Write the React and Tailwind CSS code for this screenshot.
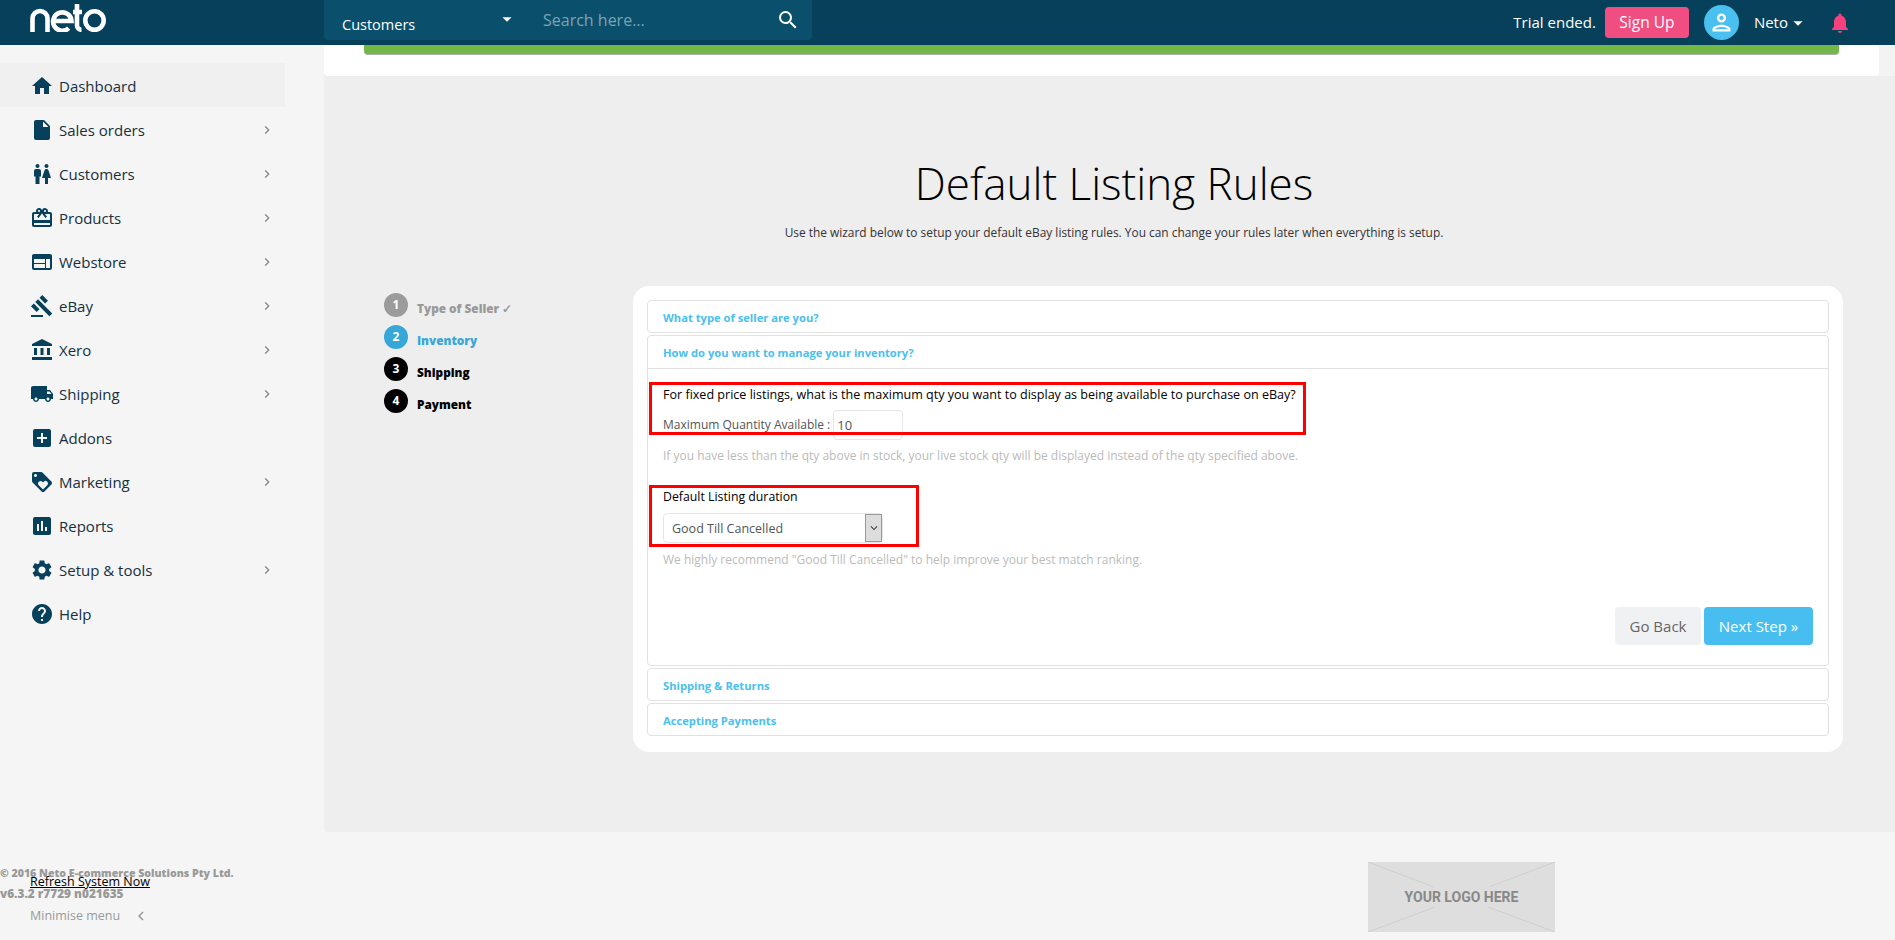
import {
  MdHome, MdInsertDriveFile, MdWc, MdCardGiftcard, MdWeb, MdGavel, MdAccountBalance,
  MdLocalShipping, MdAddBox, MdLoyalty, MdAssessment, MdSettings, MdHelp, MdChevronRight,
  MdChevronLeft, MdSearch, MdOutlinePerson, MdNotifications, MdArrowDropDown, MdKeyboardArrowDown,
} from 'react-icons/md';

const MENU = [
  { label: 'Dashboard', icon: MdHome, active: true },
  { label: 'Sales orders', icon: MdInsertDriveFile, arrow: true },
  { label: 'Customers', icon: MdWc, arrow: true },
  { label: 'Products', icon: MdCardGiftcard, arrow: true },
  { label: 'Webstore', icon: MdWeb, arrow: true },
  { label: 'eBay', icon: MdGavel, arrow: true },
  { label: 'Xero', icon: MdAccountBalance, arrow: true },
  { label: 'Shipping', icon: MdLocalShipping, arrow: true },
  { label: 'Addons', icon: MdAddBox },
  { label: 'Marketing', icon: MdLoyalty, arrow: true },
  { label: 'Reports', icon: MdAssessment },
  { label: 'Setup & tools', icon: MdSettings, arrow: true },
  { label: 'Help', icon: MdHelp },
];

const STEPS = [
  { n: 1, label: 'Type of Seller ✓', circle: 'bg-[#9b9b9b]', text: 'text-[#999999]' },
  { n: 2, label: 'Inventory', circle: 'bg-[#36a7d6]', text: 'text-[#36a7d6]' },
  { n: 3, label: 'Shipping', circle: 'bg-black', text: 'text-black' },
  { n: 4, label: 'Payment', circle: 'bg-black', text: 'text-black' },
];

function NetoLogo() {
  return (
    <svg width="76" height="28" viewBox="0 0 76 28" fill="none" stroke="white" strokeWidth="4.6">
      <path d="M2.5 28V14.5a7.5 7.5 0 0 1 15 0V28" />
      <path d="M24 17h17.5a9.2 9.2 0 1 0-2.8 7.2" />
      <path d="M47 0v21a4.5 4.5 0 0 0 4.5 4.8M43 8h9" />
      <circle cx="64.5" cy="16.5" r="9.2" />
    </svg>
  );
}

function Header() {
  return (
    <header className="h-[45px] bg-[#07405a] flex items-start text-white relative z-10">
      <div className="w-[324px] pl-[30px] pt-[4px] shrink-0">
        <NetoLogo />
      </div>
      <div className="w-[488px] h-[40px] bg-[#0a4f6b] rounded-b flex items-center relative">
        <span className="absolute left-[18px] top-[14px] text-[14.5px] leading-[22px]">Customers</span>
        <MdArrowDropDown className="absolute left-[172px] top-[8px] text-[22px]" />
        <span className="absolute left-[219px] top-[9px] text-[16px] leading-[22px] text-[#7fa3b5]">Search here...</span>
        <MdSearch className="absolute right-[12px] top-[8px] text-[24px]" />
      </div>
      <div className="ml-auto flex items-center h-[45px] pr-[43px]">
        <span className="text-[15px]">Trial ended.</span>
        <button className="ml-[9px] w-[84px] h-[31px] rounded bg-[#f04e80] text-[15.5px]">Sign Up</button>
        <div className="ml-[15px] w-[35px] h-[35px] rounded-full bg-[#4ac0f0] flex items-center justify-center">
          <MdOutlinePerson className="text-[27px]" />
        </div>
        <span className="ml-[15px] text-[15px]">Neto</span>
        <MdArrowDropDown className="text-[22px] -ml-[1px]" />
        <MdNotifications className="ml-[19px] text-[24px] text-[#f8407c]" />
      </div>
    </header>
  );
}

function Sidebar() {
  return (
    <nav className="w-[324px] shrink-0 pt-[18px]">
      {MENU.map(m => {
        const Icon = m.icon;
        return (
          <div key={m.label}
               className={`w-[285px] h-[44px] flex items-center pl-[30px] pr-[10px] pt-[2px] text-[15px] text-[#15303f] ${m.active ? 'bg-[#f0f0f0]' : ''}`}>
            <Icon className="w-[24px] h-[24px] text-[#07405a] shrink-0" />
            <span className="ml-[5px]">{m.label}</span>
            {m.arrow && <MdChevronRight className="ml-auto text-[16px] text-[#888888]" />}
          </div>
        );
      })}
    </nav>
  );
}

function Wizard() {
  return (
    <div className="w-[1210px] h-[466px] bg-white rounded-2xl p-[14px] flex flex-col gap-[2px]">
      <div className="border border-[#e2e2e2] rounded h-[33px] flex items-center pl-[15px] pt-[4px] text-[11.2px] font-bold text-[#4ac0f0]">
        What type of seller are you?
      </div>
      <div className="border border-[#e2e2e2] rounded h-[331px]">
        <div className="h-[33px] border-b border-[#e2e2e2] flex items-center pl-[15px] pt-[3px] text-[11.2px] font-bold text-[#4ac0f0]">
          How do you want to manage your inventory?
        </div>
        <div className="relative pl-[15px] pr-[15px] pt-[16px]">
          <p className="text-[12.55px] leading-[20px] text-black">
            For fixed price listings, what is the maximum qty you want to display as being available to purchase on eBay?
          </p>
          <div className="mt-[5px] flex items-center text-[12px] text-[#555555]">
            <span>Maximum Quantity Available :</span>
            <input readOnly value="10" className="ml-[3px] w-[70px] h-[30px] border border-[#e6e6e6] rounded px-[3px] text-[13px] text-[#555555]" />
          </div>
          <p className="mt-[6px] text-[12px] leading-[20px] text-[#bbbbbb]">
            If you have less than the qty above in stock, your live stock qty will be displayed instead of the qty specified above.
          </p>
          <p className="mt-[21px] text-[12.3px] leading-[20px] text-black">Default Listing duration</p>
          <div className="mt-[6px] w-[220px] h-[30px] border border-[#e6e6e6] rounded flex items-center justify-between pl-[8px] text-[12.5px] text-[#555555]">
            <span className="pt-[2px]">Good Till Cancelled</span>
            <span className="w-[17px] h-[28px] bg-[#dddddd] border border-[#999999] flex items-center justify-center">
              <MdKeyboardArrowDown className="text-[14px] text-[#444444]" />
            </span>
          </div>
          <p className="mt-[7px] text-[12px] leading-[20px] text-[#bbbbbb]">
            We highly recommend "Good Till Cancelled" to help improve your best match ranking.
          </p>
          <div className="mt-[37px] flex justify-end gap-[3px] text-[15px]">
            <button className="w-[86px] h-[38px] rounded bg-[#f0f1f3] text-[#666666]">Go Back</button>
            <button className="w-[109px] h-[38px] rounded bg-[#48bef0] text-white">Next Step »</button>
          </div>
          <div className="absolute left-[1px] top-[13px] w-[657px] h-[53px] border-[3px] border-[#ff0000] pointer-events-none" />
          <div className="absolute left-[1px] top-[116px] w-[270px] h-[62px] border-[3px] border-[#ff0000] pointer-events-none" />
        </div>
      </div>
      <div className="border border-[#e2e2e2] rounded h-[33px] flex items-center pl-[15px] pt-[4px] text-[11.2px] font-bold text-[#4ac0f0]">
        Shipping &amp; Returns
      </div>
      <div className="border border-[#e2e2e2] rounded h-[33px] flex items-center pl-[15px] pt-[4px] text-[11.2px] font-bold text-[#4ac0f0]">
        Accepting Payments
      </div>
    </div>
  );
}

function Main() {
  return (
    <main className="flex-1 bg-[#eeeeee] h-[787px] rounded-bl">
      <div className="bg-[#f3f3f3]">
        <div className="mr-[16px] h-[31px] bg-white rounded-b">
          <div className="ml-[40px] mr-[40px] h-[10px] bg-[#74b749] border-b border-[#b0b0b0] rounded-b" />
        </div>
      </div>
      <div className="pl-[9px] text-center">
        <h1 className="mt-[74px] text-[44px] leading-[66px] font-light text-black">Default Listing Rules</h1>
        <p className="mt-[7px] text-[11.9px] leading-[18px] text-[#333333]">
          Use the wizard below to setup your default eBay listing rules. You can change your rules later when everything is setup.
        </p>
      </div>
      <div className="mt-[45px] flex pl-[60px]">
        <div className="w-[249px] pt-[7px] flex flex-col gap-[8px]">
          {STEPS.map(s => (
            <div key={s.n} className="flex items-center h-[24px]">
              <span className={`w-[24px] h-[24px] rounded-full flex items-center justify-center text-[12px] font-bold text-white ${s.circle}`}>{s.n}</span>
              <span className={`ml-[9px] pt-[8px] text-[11.8px] font-extrabold ${s.text}`}>{s.label}</span>
            </div>
          ))}
        </div>
        <Wizard />
      </div>
    </main>
  );
}

function Footer() {
  return (
    <footer className="h-[108px] flex relative">
      <div className="w-[324px] relative font-extrabold text-[#999999] pt-[31px]">
        <p className="text-[10.6px] leading-[20px]">© 2016 Neto E-commerce Solutions Pty Ltd.</p>
        <p className="text-[11.8px] leading-[20px]">v6.3.2 r7729 n021635</p>
        <a className="absolute left-[30px] top-[41px] text-[12.5px] leading-[18px] font-normal text-black underline">Refresh System Now</a>
        <div className="absolute left-[30px] top-[75px] flex items-center text-[12.5px] font-normal text-[#999999]">
          Minimise menu
          <MdChevronLeft className="ml-[12px] text-[18px]" />
        </div>
      </div>
      <div className="ml-[1044px] mt-[30px] w-[187px] h-[70px] relative bg-[#dedede] flex items-center justify-center text-[14px] font-bold text-[#888888] font-['Roboto',sans-serif]">
        <svg className="absolute inset-0" width="187" height="70" viewBox="0 0 187 70" stroke="#cfcfcf" strokeWidth="1">
          <path d="M0 0L66 25M187 0L121 25M0 70L67 45M187 70L120 45" />
        </svg>
        <span className="relative">YOUR LOGO HERE</span>
      </div>
    </footer>
  );
}

export default function App() {
  return (
    <div className="w-[1895px] h-[940px] overflow-hidden bg-[#f5f5f5] font-['Open_Sans',sans-serif]">
      <Header />
      <div className="flex">
        <Sidebar />
        <Main />
      </div>
      <Footer />
    </div>
  );
}
